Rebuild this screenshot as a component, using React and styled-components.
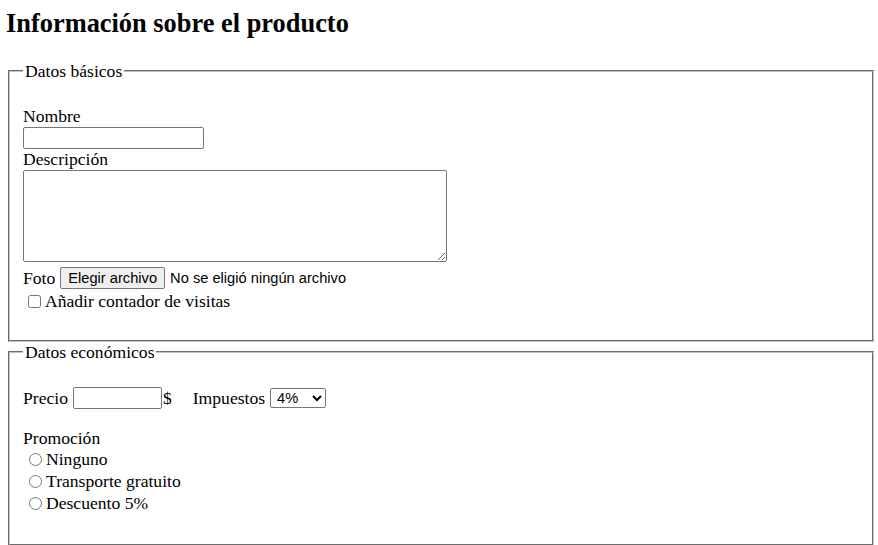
import styled, { createGlobalStyle } from "styled-components"

const GlobalStyle = createGlobalStyle`
    body {
        margin: 8px 2px 0 6px;
        font-family: "Liberation Serif", "Times New Roman", serif;
        font-size: 17.6px;
        line-height: 20px;
        color: #000;
        background: #fff;
    }
`

const Title = styled.h2`
    font-size: 26.4px;
    font-weight: 700;
    line-height: 30px;
    margin: 0 0 23px 0;
`

const Group = styled.fieldset`
    margin: 0 2px;
    padding: 6px 13px ${props => props.$bottom || 11}px 13px;
    border: 2px groove #c0c0c0;
    box-sizing: border-box;
`

const Legend = styled.legend`
    padding: 0 2px;
    line-height: 20px;
`

const Para = styled.div`
    margin: ${props => props.$top || 18}px 0 18px 0;
`

const Line = styled.div`
    display: flex;
    align-items: center;
    height: ${props => props.$h || 20}px;
    margin-top: ${props => props.$top || 0}px;
    white-space: pre;
`

const TextInput = styled.input`
    display: block;
    font-family: "Liberation Sans", Arial, sans-serif;
    font-size: 14.67px;
    width: ${props => props.$w}px;
    height: 22px;
    box-sizing: border-box;
    border: 1px solid #767676;
    border-radius: 2px;
    padding: 1px 2px;
    margin: ${props => props.$margin || "0"};
    background: #fff;
`

const Area = styled.textarea`
    display: block;
    width: 424px;
    height: 92px;
    box-sizing: border-box;
    border: 1px solid #767676;
    border-radius: 2px;
    margin: 1px 0 0 0;
    resize: both;
`

const FileButton = styled.button`
    font-family: "Liberation Sans", Arial, sans-serif;
    font-size: 14.67px;
    height: 22px;
    padding: 0 7px;
    margin: 0 5px;
    background: #efefef;
    border: 1px solid #767676;
    border-radius: 2px;
    color: #000;
`

const FileName = styled.span`
    font-family: "Liberation Sans", Arial, sans-serif;
    font-size: 14.67px;
`

const Tick = styled.input`
    width: 13px;
    height: 13px;
    margin: 0 ${props => props.$right}px 0 ${props => props.$left}px;
`

const Select = styled.select`
    font-family: "Liberation Sans", Arial, sans-serif;
    font-size: 14.67px;
    height: 20px;
    width: 56px;
    margin: 0 0 0 5px;
    padding: 0 0 0 2px;
    border: 1px solid #767676;
    border-radius: 2px;
    background: #fff;
    color: #000;
`

const Gap = styled.span`
    display: inline-block;
    width: ${props => props.$w}px;
`

const promos = ["Ninguno", "Transporte gratuito", "Descuento 5%"]

const App = () => {
    return (
        <>
            <GlobalStyle />
            <Title>Información sobre el producto</Title>
            <Group>
                <Legend>Datos básicos</Legend>
                <Para $top={19}>
                    <Line>Nombre</Line>
                    <TextInput type="text" $w={181} $margin="1px 0 0 0" />
                    <Line>Descripción</Line>
                    <Area />
                    <Line $h={26} $top={3}>
                        Foto
                        <FileButton type="button">Elegir archivo</FileButton>
                        <FileName>No se eligió ningún archivo</FileName>
                    </Line>
                    <Line>
                        <Tick type="checkbox" $left={5} $right={4} />
                        Añadir contador de visitas
                    </Line>
                </Para>
            </Group>
            <Group $bottom={12}>
                <Legend>Datos económicos</Legend>
                <Para>
                    <Line $h={24}>
                        Precio
                        <TextInput type="text" $w={89} $margin="0 1px 0 5px" />
                        $
                        <Gap $w={21} />
                        Impuestos
                        <Select defaultValue="4">
                            <option value="4">4%</option>
                            <option value="10">10%</option>
                            <option value="21">21%</option>
                        </Select>
                    </Line>
                </Para>
                <Para>
                    <Line>Promoción</Line>
                    {promos.map((p, i) => (
                        <Line key={i} $h={22}>
                            <Tick type="radio" name="promo" $left={6} $right={4} />
                            {p}
                        </Line>
                    ))}
                </Para>
            </Group>
        </>
    )
}

export default App
